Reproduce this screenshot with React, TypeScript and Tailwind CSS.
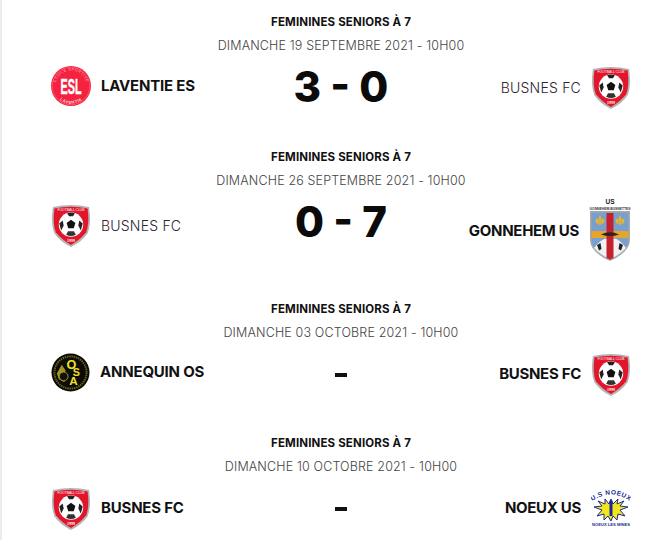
const BusnesLogo = () => (
  <svg width="40" height="43" viewBox="0 0 40 44" className="shrink-0 -my-[1px]">
    <path d="M1.500 3 Q20 -1 38.500 3 Q41 20 37 30 Q31 39 20 44 Q9 39 3 30 Q-1 20 1.500 3Z" fill="#b4b4b4" />
    <path d="M3 4.500 Q20 1 37 4.500 Q39 20 35.500 29 Q29 37 20 42 Q11 37 4.500 29 Q1 20 3 4.500Z" fill="#e2152b" />
    <text x="20" y="7.500" textAnchor="middle" fontSize="3.400" fill="#fff" fontFamily="Liberation Sans, sans-serif">FOOTBALL CLUB</text>
    <circle cx="20" cy="21" r="12.500" fill="#fff" />
    <path d="M20 16 L24.500 19.500 L22.800 24.800 L17.200 24.800 L15.500 19.500Z" fill="#111" />
    <path d="M16 9.500 Q20 8 24 9.500 L22 12.500 L18 12.500Z" fill="#222" />
    <path d="M8 20 L11.500 17 L12.500 22 L10 27Z" fill="#222" />
    <path d="M32 20 L28.500 17 L27.500 22 L30 27Z" fill="#222" />
    <path d="M15 31.500 L17 28 L23 28 L25 31.500 Q20 34 15 31.500Z" fill="#333" />
    <text x="20" y="38.500" textAnchor="middle" fontSize="4" fontWeight="700" fill="#fff" fontFamily="Liberation Serif, serif">1999</text>
  </svg>
);

const EslLogo = () => (
  <svg width="40" height="40" viewBox="0 0 40 40" className="shrink-0">
    <circle cx="20" cy="20" r="20" fill="#f5213f" />
    <circle cx="20" cy="20" r="18.800" fill="none" stroke="#f9808f" strokeWidth="0.500" />
    <path id="esl-top" d="M4.500 20 A15.500 15.500 0 0 1 35.500 20" fill="none" />
    <path id="esl-bottom" d="M2.500 24 A18 18 0 0 0 37.500 24" fill="none" />
    <text fontSize="3.800" fill="#fbb4bd" fontFamily="Liberation Sans, sans-serif" letterSpacing="0.5">
      <textPath href="#esl-top" startOffset="50%" textAnchor="middle">ETOILE SPORTIVE</textPath>
    </text>
    <text fontSize="4.200" fontWeight="700" fill="#fbd4d9" fontFamily="Liberation Sans, sans-serif" letterSpacing="0.5">
      <textPath href="#esl-bottom" startOffset="50%" textAnchor="middle">LAVENTIE</textPath>
    </text>
    <text x="20" y="28" textAnchor="middle" fontSize="22" fontWeight="700" fill="#fff" stroke="#fff" strokeWidth="0.400" fontFamily="Liberation Sans, sans-serif" textLength="21" lengthAdjust="spacingAndGlyphs">ESL</text>
  </svg>
);

const OsaLogo = () => (
  <svg width="39" height="39" viewBox="0 0 40 40" className="shrink-0">
    <circle cx="20" cy="20" r="19.500" fill="#0c0b06" />
    <circle cx="20" cy="20" r="16.500" fill="none" stroke="#6f631a" strokeWidth="2" strokeDasharray="1.500 0.800" />
    <path d="M6 21 L11 12 L15 18 Q12 24 14 30 L8 27Z" fill="#d8c52a" opacity="0.75" />
    <circle cx="13" cy="24" r="4.500" fill="#111" stroke="#a8981f" strokeWidth="1" />
    <text x="21" y="16" textAnchor="middle" fontSize="13" fontWeight="700" fill="#efe02a" fontFamily="Liberation Sans, sans-serif">O</text>
    <text x="26" y="24" textAnchor="middle" fontSize="11" fontWeight="700" fill="#efe02a" fontFamily="Liberation Sans, sans-serif">S</text>
    <text x="23" y="33" textAnchor="middle" fontSize="12" fontWeight="700" fill="#efe02a" fontFamily="Liberation Sans, sans-serif">A</text>
  </svg>
);

const Fleur = ({ x }: { x: number }) => (
  <g fill="#e6b52e" transform={`translate(${x} 23)`}>
    <path d="M0 -6 Q2.200 -3 0.800 0 L0.800 4 L-0.800 4 L-0.800 0 Q-2.200 -3 0 -6Z" />
    <path d="M-1 -1 Q-4.500 -4 -4.500 0 Q-4.500 2.500 -2 2.500 Q-3 0.500 -1 0.500Z" />
    <path d="M1 -1 Q4.500 -4 4.500 0 Q4.500 2.500 2 2.500 Q3 0.500 1 0.500Z" />
    <rect x="-3" y="1.500" width="6" height="1.200" />
  </g>
);

const GonnehemLogo = () => (
  <svg width="42" height="63" viewBox="0 0 42 63" className="shrink-0 -mt-[3px]">
    <text x="21" y="6" textAnchor="middle" fontSize="6.500" fontWeight="700" fill="#222" fontFamily="Liberation Sans, sans-serif">US</text>
    <text x="21" y="11.500" textAnchor="middle" fontSize="3.600" fontWeight="700" fill="#333" fontFamily="Liberation Sans, sans-serif" textLength="41" lengthAdjust="spacingAndGlyphs">GONNEHEM-BUSNETTES</text>
    <path d="M1 13 L41 13 L41 42 Q41 54 21 63 Q1 54 1 42Z" fill="#a8a8a8" />
    <path d="M2.500 14.500 L39.500 14.500 L39.500 42 Q39.500 53 21 61 Q2.500 53 2.500 42Z" fill="#79a0cc" />
    <Fleur x={11} />
    <Fleur x={31} />
    <path d="M2.500 33 L39.500 33 L39.500 40 L2.500 40Z" fill="#e6a52a" />
    <path d="M5 50 Q14 38 21 41 Q29 38 37 50 Q31 57 21 61 Q11 57 5 50Z" fill="#f1f1f1" />
    <path d="M8 47 L11.500 45 L12.500 51 L10 52.500Z" fill="#222" />
    <path d="M34 47 L30.500 45 L29.500 51 L32 52.500Z" fill="#222" />
    <path d="M17.500 15 L24.500 15 L24.500 60 L21 61.500 L17.500 60Z" fill="#c5202c" />
    <path d="M12 36.500 Q21 32 30 36.500 Q21 39.500 12 36.500Z" fill="#2b2520" />
  </svg>
);

const NoeuxLogo = () => (
  <svg width="40" height="40" viewBox="0 0 40 40" className="shrink-0">
    <path id="noeux-arc" d="M3 12 Q20 1 37 12" fill="none" />
    <text fontSize="6.500" fontWeight="700" fill="#1a2a92" fontFamily="Liberation Sans, sans-serif" letterSpacing="0.5">
      <textPath href="#noeux-arc" startOffset="50%" textAnchor="middle">U.S NOEUX</textPath>
    </text>
    <path d="M20 11 L22 16 L27 11 L26 16 L33 13 L29 18 L37 19 L29 22 L34 28 L27 26 L26 32 L22 28 L20 33 L17 28 L13 32 L13 26 L6 28 L11 22 L3 19 L11 18 L7 13 L14 16 L14 11 L18 16Z" fill="#f3e620" stroke="#1a2a92" strokeWidth="1" />
    <rect x="18.500" y="15" width="3" height="13" fill="#1a2a92" />
    <circle cx="20" cy="14" r="1.700" fill="#1a2a92" />
    <text x="20" y="38" textAnchor="middle" fontSize="4.200" fontWeight="700" fill="#1a2a92" fontFamily="Liberation Sans, sans-serif" textLength="38" lengthAdjust="spacingAndGlyphs">NOEUX LES MINES</text>
  </svg>
);

type MatchProps = {
  date: string;
  score?: string;
  left: React.ReactNode;
  right: React.ReactNode;
  leftName: string;
  rightName: string;
  leftBold?: boolean;
  rightBold?: boolean;
  leftClass?: string;
};

const Match = ({ date, score, left, right, leftName, rightName, leftBold, rightBold, leftClass }: MatchProps) => (
  <div className="flex flex-col pb-[39px]">
    <p className="text-center text-[11.5px] leading-[18px] font-bold text-[#111] tracking-[0.15px]">FEMININES SENIORS À 7</p>
    <p className="mt-[6px] text-center text-[12.5px] leading-[18px] font-light text-[#444] tracking-[0.15px]">{date}</p>
    <div className="mt-[11px] grid grid-cols-[1fr_auto_1fr] items-center">
      <div className={`flex items-center gap-[10px] ${leftClass ?? ""}`}>
        {left}
        <span className={leftBold ? "text-[15px] font-bold text-[#111] tracking-[-0.2px]" : "text-[14px] font-light text-[#2f2433] tracking-[0.2px]"}>{leftName}</span>
      </div>
      <div className="self-start h-[42px] flex items-center justify-center text-[42px] leading-none font-extrabold text-[#0b0b0b]">
        {score ?? <span className="block w-[12px] h-[4px] mt-[2px] bg-[#111]" />}
      </div>
      <div className="flex items-center justify-end gap-[10px]">
        <span className={rightBold ? "text-[15px] font-bold text-[#111] tracking-[-0.3px]" : "text-[14px] font-light text-[#2f2433] tracking-[0.2px]"}>{rightName}</span>
        {right}
      </div>
    </div>
  </div>
);

export default function App() {
  return (
    <div className="h-[540px] overflow-hidden bg-white border-l-2 border-[#ececec] pl-[49px] pr-[14px] pt-[13px] font-['Inter',sans-serif]">
      <Match
        date="DIMANCHE 19 SEPTEMBRE 2021 - 10H00"
        score="3 - 0"
        left={<EslLogo />}
        right={<BusnesLogo />}
        leftName="LAVENTIE ES"
        rightName="BUSNES FC"
        leftBold
        leftClass="mb-[3px]"
      />
      <Match
        date="DIMANCHE 26 SEPTEMBRE 2021 - 10H00"
        score="0 - 7"
        left={<BusnesLogo />}
        right={<GonnehemLogo />}
        leftName="BUSNES FC"
        rightName="GONNEHEM US"
        rightBold
        leftClass="mb-[12px]"
      />
      <Match
        date="DIMANCHE 03 OCTOBRE 2021 - 10H00"
        left={<OsaLogo />}
        right={<BusnesLogo />}
        leftName="ANNEQUIN OS"
        rightName="BUSNES FC"
        leftBold
        rightBold
        leftClass="mb-[3px]"
      />
      <Match
        date="DIMANCHE 10 OCTOBRE 2021 - 10H00"
        left={<BusnesLogo />}
        right={<NoeuxLogo />}
        leftName="BUSNES FC"
        rightName="NOEUX US"
        leftBold
        rightBold
      />
    </div>
  );
}
